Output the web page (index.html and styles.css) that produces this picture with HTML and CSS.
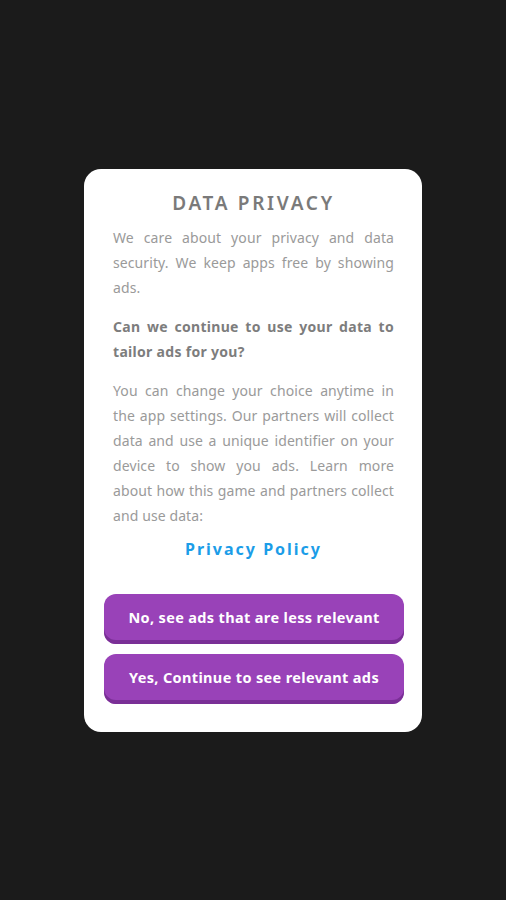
FILE: index.html
```html
<!DOCTYPE html>
<html lang="en">
<head>
    <meta charset="UTF-8">
    <title>Data Privacy</title>
    <link rel="stylesheet" href="styles.css">
</head>
<body>
    <div class="privacy-card">
        <h2 class="title">DATA PRIVACY</h2>
        <p class="text">We care about your privacy and data security. We keep apps free by showing ads.</p>
        <p class="text question">Can we continue to use your data to tailor ads for you?</p>
        <p class="text">You can change your choice anytime in the app settings. Our partners will collect data and use a unique identifier on your device to show you ads. Learn more about how this game and partners collect and use data:</p>
        <a class="policy-link" href="#">Privacy Policy</a>

        <div class="buttons">
            <button class="choice-btn">No, see ads that are less relevant</button>
            <button class="choice-btn">Yes, Continue to see relevant ads</button>
        </div>
    </div>
</body>
</html>
```

FILE: styles.css
```css
body {
    margin: 0;
    padding: 0;
    background: #1b1b1b;
    font-family: "Noto Sans", Arial, sans-serif;
    height: 900px;
    display: flex;
    justify-content: center;
    align-items: flex-start;
}
.privacy-card {
    margin-top: 169px;
    width: 338px;
    height: 563px;
    box-sizing: border-box;
    background: white;
    border-radius: 17px;
    padding: 21px 28px 0 29px;
    display: flex;
    flex-direction: column;
}
.title {
    margin: 0 0 9px;
    text-align: center;
    font-size: 19px;
    font-weight: 600;
    letter-spacing: 2.7px;
    color: #7a7a7a;
    line-height: 26px;
}
.text {
    margin: 0 0 14px;
    font-size: 14px;
    line-height: 25px;
    letter-spacing: 0.1px;
    color: #9a9a9a;
    text-align: justify;
}
.question {
    font-weight: bold;
    letter-spacing: 0.3px;
    color: #7d7d7d;
}
.policy-link {
    display: block;
    text-align: center;
    font-size: 16px;
    font-weight: bold;
    letter-spacing: 2px;
    color: #1b9de8;
    text-decoration: none;
    line-height: 24px;
    margin-top: -5px;
}
.buttons {
    display: flex;
    flex-direction: column;
    gap: 10px;
    margin: 33px -10px 0 -9px;
}
.choice-btn {
    height: 50px;
    border: none;
    border-radius: 12px;
    background: #9942b8;
    box-shadow: inset 0 -4px 0 #7a2f96;
    color: white;
    font-family: inherit;
    font-size: 14.5px;
    font-weight: bold;
    letter-spacing: 0.35px;
    padding: 0 0 4px;
    cursor: pointer;
}
```
